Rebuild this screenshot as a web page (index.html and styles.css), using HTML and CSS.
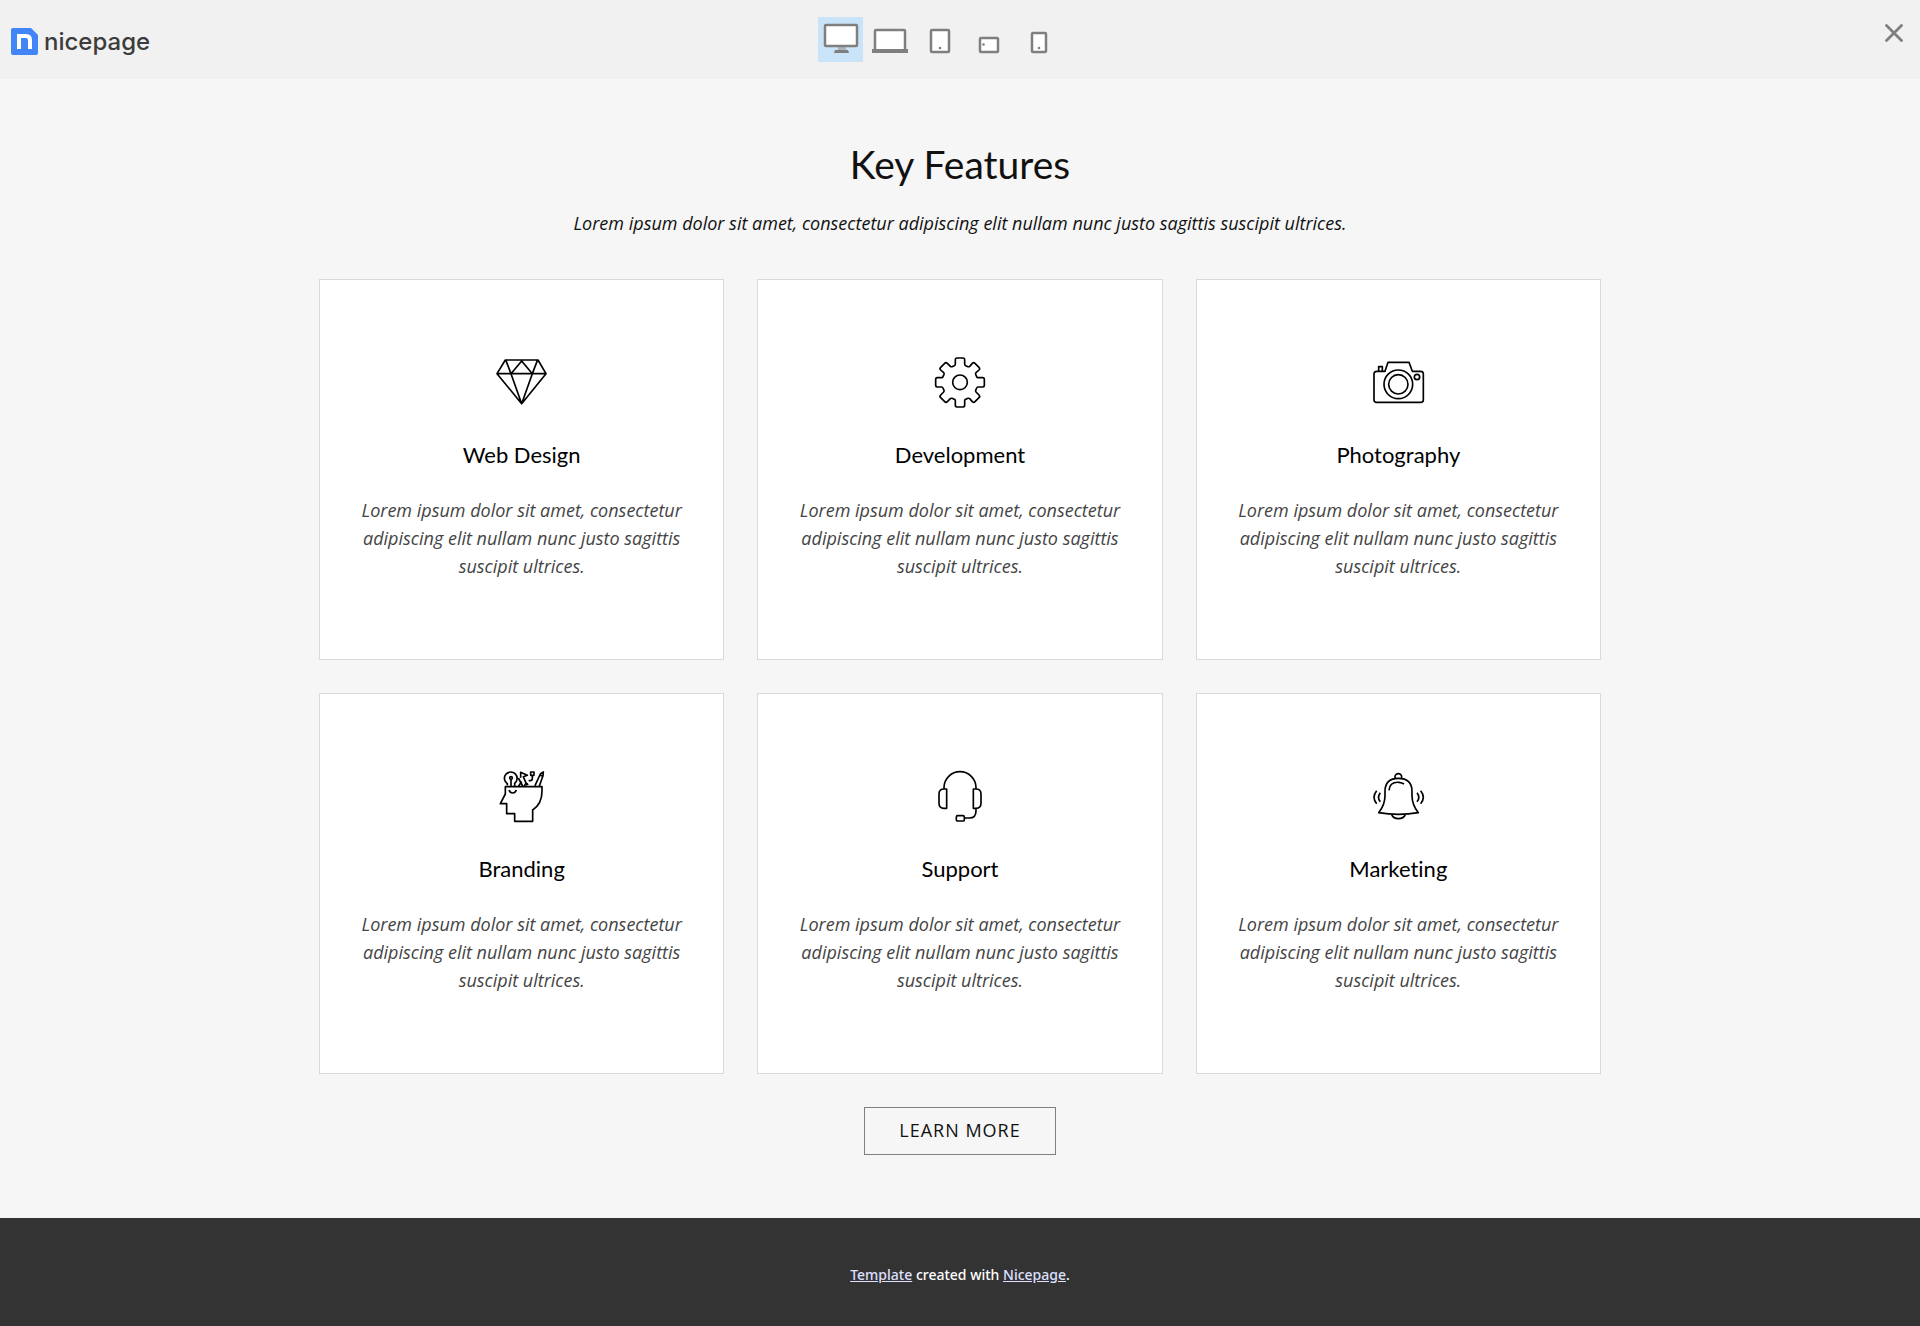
FILE: index.html
```html
<!DOCTYPE html>
<html lang="en">
<head>
<meta charset="utf-8">
<meta name="viewport" content="width=device-width, initial-scale=1">
<title>Key Features</title>
<link rel="stylesheet" href="styles.css">
</head>
<body>
<header class="topbar">
  <a class="brand" href="#" aria-label="nicepage">
    <svg class="brand-mark" viewBox="0 0 27 27" aria-hidden="true">
      <path fill="#4285f6" d="M2 0H20L27 7V25Q27 27 25 27H2Q0 27 0 25V2Q0 0 2 0Z"/>
      <path fill="none" stroke="#fff" stroke-width="4" d="M8 21V6M8 8H15Q19 8 19 12V21"/>
    </svg>
    <span class="brand-name">nicepage</span>
  </a>
  <nav class="devices" aria-label="Preview size">
    <button class="device device-active" type="button" aria-label="Desktop">
      <svg viewBox="0 0 45 45"><path fill="#a8b4be" d="M20 30h8v4h-8z"/><path fill="#7f7f7f" d="M17 33h13l1 3H16z"/><rect x="7" y="8" width="32" height="21" rx="1" fill="#fff" stroke="#7f7f7f" stroke-width="2.500"/></svg>
    </button>
    <button class="device" type="button" aria-label="Laptop">
      <svg viewBox="0 0 45 45"><rect x="7" y="13" width="30" height="21" rx="1" fill="#fff" stroke="#7f7f7f" stroke-width="2.500"/><path fill="#7f7f7f" d="M4 32h36v4H4z"/></svg>
    </button>
    <button class="device" type="button" aria-label="Tablet">
      <svg viewBox="0 0 45 45"><rect x="13" y="13" width="18" height="22" rx="1" fill="#fff" stroke="#7f7f7f" stroke-width="2.500"/><circle cx="22" cy="31" r="1.300" fill="#7f7f7f"/></svg>
    </button>
    <button class="device" type="button" aria-label="Phone landscape">
      <svg viewBox="0 0 45 45"><rect x="12" y="21" width="18" height="14" rx="1" fill="#fff" stroke="#7f7f7f" stroke-width="2.500"/><circle cx="15.500" cy="27.500" r="1.300" fill="#7f7f7f"/></svg>
    </button>
    <button class="device" type="button" aria-label="Phone portrait">
      <svg viewBox="0 0 45 45"><rect x="14" y="16" width="14" height="19" rx="1" fill="#fff" stroke="#7f7f7f" stroke-width="2.500"/><circle cx="21" cy="31" r="1.300" fill="#7f7f7f"/></svg>
    </button>
  </nav>
  <button class="close" type="button" aria-label="Close">
    <svg viewBox="0 0 18 18"><path d="M1.500 1.500l15 15M16.500 1.500l-15 15" fill="none" stroke="#7f7f7f" stroke-width="2.800" stroke-linecap="round"/></svg>
  </button>
</header>

<main class="features">
  <h1 class="features-title">Key Features</h1>
  <p class="features-lead">Lorem ipsum dolor sit amet, consectetur adipiscing elit nullam nunc justo sagittis suscipit ultrices.</p>
  <div class="grid">
    <article class="card">
      <svg class="icon" viewBox="42 42 168 168" aria-hidden="true"><path d="M76 60H174L198 101L125 191L51 101ZM51 101H198M78 62L93 101L125 191L157 101L172 62M93 101L125 63L157 101"/></svg>
      <h2 class="card-title">Web Design</h2>
      <p class="card-text">Lorem ipsum dolor sit amet, consectetur adipiscing elit nullam nunc justo sagittis suscipit ultrices.</p>
    </article>
    <article class="card">
      <svg class="icon" viewBox="42 42 168 168" aria-hidden="true"><path d="M112 59Q112 54 117 54H135Q140 54 140 59V73Q140 76 143 77L150 80Q153 81 155 79L163 70Q167 66 171 70L183 82Q187 86 183 90L174 98Q172 100 173 103L176 110Q177 113 180 113H194Q199 113 199 118V136Q199 141 194 141H180Q177 141 176 144L173 151Q172 154 174 156L183 165Q187 169 183 173L171 185Q167 189 163 185L155 176Q153 174 150 175L143 178Q140 179 140 182V196Q140 201 135 201H117Q112 201 112 196V182Q112 179 109 178L102 175Q99 174 97 176L88 185Q84 189 80 185L68 173Q64 169 68 165L77 156Q79 154 78 151L75 144Q74 141 71 141H58Q53 141 53 136V118Q53 113 58 113H71Q74 113 75 110L78 103Q79 100 77 98L68 90Q64 86 68 82L80 70Q84 66 88 70L97 79Q99 81 102 80L109 77Q112 76 112 73Z"/><circle cx="126" cy="127" r="22"/></svg>
      <h2 class="card-title">Development</h2>
      <p class="card-text">Lorem ipsum dolor sit amet, consectetur adipiscing elit nullam nunc justo sagittis suscipit ultrices.</p>
    </article>
    <article class="card">
      <svg class="icon" viewBox="42 42 168 168" aria-hidden="true"><path d="M62 94H87L96 67H159L169 94H194Q202 94 202 102V180Q202 187 194 187H62Q54 187 54 180V102Q54 94 62 94ZM68 93V80H79V93"/><circle cx="127" cy="133" r="43"/><circle cx="127" cy="133" r="29"/><circle cx="183" cy="111" r="8"/></svg>
      <h2 class="card-title">Photography</h2>
      <p class="card-text">Lorem ipsum dolor sit amet, consectetur adipiscing elit nullam nunc justo sagittis suscipit ultrices.</p>
    </article>
    <article class="card">
      <svg class="icon" viewBox="42 42 168 168" aria-hidden="true"><path d="M76 98H186V112Q186 150 158 168V202H104V179H80V149H61L76 120ZM87 108Q90 117 98 117Q106 117 109 108M82 94V89A19 19 0 1 1 104 88V95M93 76V95M115 72L128 96M122 71V55L142 64L130 68L141 94M116 96Q121 86 126 84M133 96Q139 82 144 93M152 54H162V64H152ZM157 65V74Q157 80 146 80M165 95L181 60L190 54L189 65L178 96M180 63L188 67"/><circle cx="93" cy="72" r="4"/></svg>
      <h2 class="card-title">Branding</h2>
      <p class="card-text">Lorem ipsum dolor sit amet, consectetur adipiscing elit nullam nunc justo sagittis suscipit ultrices.</p>
    </article>
    <article class="card">
      <svg class="icon" viewBox="42 42 168 168" aria-hidden="true"><path d="M78 105V101A48 48 0 0 1 174 101V105M86 105H78Q63 105 63 120V148Q63 163 78 163H86ZM166 105H174Q189 105 189 120V148Q189 163 174 163H166ZM174 164V170Q174 192 154 192H140M119 185H135Q139 185 139 189V197Q139 201 135 201H119Q115 201 115 197V189Q115 185 119 185Z"/></svg>
      <h2 class="card-title">Support</h2>
      <p class="card-text">Lorem ipsum dolor sit amet, consectetur adipiscing elit nullam nunc justo sagittis suscipit ultrices.</p>
    </article>
    <article class="card">
      <svg class="icon" viewBox="42 42 168 168" aria-hidden="true"><path d="M68 176Q87 152 87 125V112Q87 73 127 73Q168 73 168 112V125Q168 152 187 176Q127 186 68 176ZM117 72V69A10 10 0 0 1 137 69V72M107 182Q112 194 127 194Q143 194 148 182M99 109Q101 83 129 85Q138 86 144 90M62 110Q46 130 62 149M73 116Q62 130 73 143M194 110Q210 130 194 149M183 116Q194 130 183 143"/></svg>
      <h2 class="card-title">Marketing</h2>
      <p class="card-text">Lorem ipsum dolor sit amet, consectetur adipiscing elit nullam nunc justo sagittis suscipit ultrices.</p>
    </article>
  </div>
  <a class="more" href="#">LEARN MORE</a>
</main>

<footer class="footer">
  <p class="footer-text"><a href="#">Template</a> created with <a href="#">Nicepage</a>.</p>
</footer>
</body>
</html>
```
FILE: styles.css
```css
* {
  box-sizing: border-box;
}

body {
  margin: 0;
  min-height: 100vh;
  display: flex;
  flex-direction: column;
  background: #f6f6f6;
  color: #111;
  font-family: "Open Sans", "Noto Sans", sans-serif;
  font-size: 18px;
  line-height: 28px;
}

h1, h2, p {
  margin: 0;
}

.topbar {
  display: grid;
  grid-template-columns: 1fr auto 1fr;
  align-items: start;
  padding: 17px 17px 17px 11px;
  background: #f1f1f1;
}

.brand {
  display: flex;
  align-items: center;
  gap: 6px;
  padding-top: 11px;
  color: #3c3c3c;
  text-decoration: none;
}

.brand-mark {
  width: 27px;
  height: 27px;
}

.brand-name {
  font: 500 24px/26px Inter, sans-serif;
}

.devices {
  display: flex;
  gap: 5px;
  padding-right: 33px;
}

.device,
.close {
  padding: 0;
  border: 0;
  background: none;
}

.device {
  width: 45px;
  height: 45px;
}

.device-active {
  background: #c9e3f8;
}

.device svg,
.close svg {
  display: block;
}

.close {
  justify-self: end;
  width: 18px;
  margin-top: 7px;
}

.features {
  display: flex;
  flex-direction: column;
  align-items: center;
  padding: 61px 24px 63px;
}

.features-title {
  font: 400 39px/48px Lato, sans-serif;
}

.features-lead {
  margin: 21px 0 42px;
  font-style: italic;
  text-align: center;
}

.grid {
  display: grid;
  grid-template-columns: repeat(3, 1fr);
  gap: 33px;
  width: 100%;
  max-width: 1282px;
}

.card {
  display: flex;
  flex-direction: column;
  align-items: center;
  padding: 74px 32px 79px;
  border: 1px solid #d9d9d9;
  background: #fff;
  text-align: center;
}

.icon {
  width: 56px;
  height: 56px;
  fill: none;
  stroke: #000;
  stroke-width: 5;
  stroke-linejoin: round;
}

.card-title {
  margin: 31px 0 27px;
  font: 400 22px/28px Lato, sans-serif;
  font-variant-ligatures: none;
  color: #000;
}

.card-text {
  color: #444;
  font-style: italic;
}

.more {
  margin-top: 33px;
  padding: 8px 34px 10px;
  border: 1px solid #808080;
  color: #111;
  letter-spacing: 1px;
  text-decoration: none;
}

.footer {
  flex: 1;
  padding: 46px 24px 40px;
  background: #333;
  color: #fff;
  font-family: "Noto Sans", sans-serif;
  font-size: 14px;
  font-weight: 500;
  line-height: 22px;
  text-align: center;
}

.footer a {
  color: #dfe0ff;
}
```
